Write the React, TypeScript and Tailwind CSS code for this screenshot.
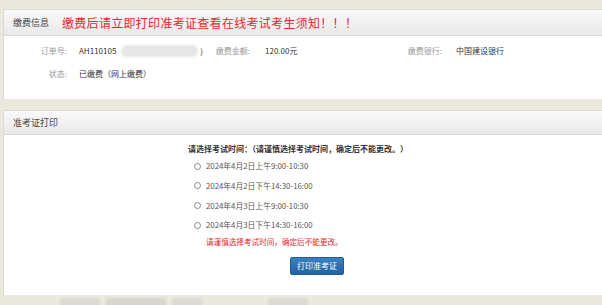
import React from "react";

const font = { fontFamily: '"Microsoft YaHei", "Noto Sans CJK SC", "Liberation Sans", sans-serif' };

const slots = [
  "2024年4月2日上午9:00-10:30",
  "2024年4月2日下午14:30-16:00",
  "2024年4月3日上午9:00-10:30",
  "2024年4月3日下午14:30-16:00",
];

function PanelHeader({ children }: { children: React.ReactNode }) {
  return (
    <div className="flex items-center border-b border-[#d9d9d9] bg-gradient-to-b from-[#f9f9f9] to-[#e9e9e9] pl-[9px]">
      {children}
    </div>
  );
}

export default function App() {
  return (
    <div className="h-[305px] w-[602px] overflow-hidden bg-[#ebe8dd] pt-[9px] text-[8px] text-[#333]" style={font}>
      <div className="ml-[3px] border-l border-t border-[#dedbd2] bg-white">
        <PanelHeader>
          <div className="flex h-[25px] items-center">
            <span className="text-[9px] text-[#444]">缴费信息</span>
            <span className="ml-[13px] text-[12px] tracking-[0.3px] text-[#e8282d]">缴费后请立即打印准考证查看在线考试考生须知！！！</span>
          </div>
        </PanelHeader>
        <div className="flex h-[63px] flex-col pt-[9px]">
          <div className="flex h-[12px] items-center">
            <span className="w-[63px] text-right text-[#999]">订单号:</span>
            <span className="ml-[12px] flex w-[124px] items-center">
              AH110105
              <span className="ml-[5px] h-[12px] w-[80px] rounded-full bg-[#e6e6e6] blur-[1px]" />
              <span className="ml-[2px]">)</span>
            </span>
            <span className="w-[47px] text-right text-[#999]">缴费金额:</span>
            <span className="ml-[15px] w-[130px]">120.00元</span>
            <span className="w-[47px] text-right text-[#999]">缴费银行:</span>
            <span className="ml-[14px]">中国建设银行</span>
          </div>
          <div className="mt-[11px] flex h-[12px] items-center">
            <span className="w-[63px] text-right text-[#999]">状态:</span>
            <span className="ml-[12px]">已缴费（网上缴费）</span>
          </div>
        </div>
      </div>

      <div className="mt-[11px] ml-[3px] border-l border-t border-[#dedbd2] bg-white">
        <PanelHeader>
          <div className="flex h-[23px] items-center text-[9px] text-[#444]">准考证打印</div>
        </PanelHeader>
        <div className="h-[160px] pl-[184px] pt-[8px]">
          <div className="font-bold text-[#333]">请选择考试时间：（请谨慎选择考试时间，确定后不能更改。）</div>
          <div className="mt-[5px] flex flex-col gap-[7.7px] pl-[6px]">
            {slots.map((s) => (
              <label key={s} className="flex h-[12px] items-center text-[#555]">
                <span className="h-[7px] w-[7px] rounded-full border border-[#888] bg-white" />
                <span className="ml-[5px] text-[7.8px]">{s}</span>
              </label>
            ))}
          </div>
          <div className="mt-[5px] pl-[18px] text-[7.6px] text-[#e8282d]">请谨慎选择考试时间，确定后不能更改。</div>
          <button className="ml-[102px] mt-[10px] flex h-[18px] w-[54px] items-center justify-center rounded-[2px] border border-[#1f5d94] bg-gradient-to-b from-[#3a80c2] to-[#22639f] text-[8px] text-white">
            打印准考证
          </button>
        </div>
      </div>

      <div className="mt-[2px] flex h-[12px] items-center gap-[6px] pl-[60px] opacity-30">
        <span className="h-[10px] w-[40px] bg-[#bbb] blur-[1px]" />
        <span className="h-[10px] w-[60px] bg-[#aaa] blur-[1px]" />
        <span className="h-[10px] w-[30px] bg-[#bbb] blur-[1px]" />
        <span className="ml-[60px] h-[10px] w-[40px] bg-[#bbb] blur-[1px]" />
      </div>
    </div>
  );
}
